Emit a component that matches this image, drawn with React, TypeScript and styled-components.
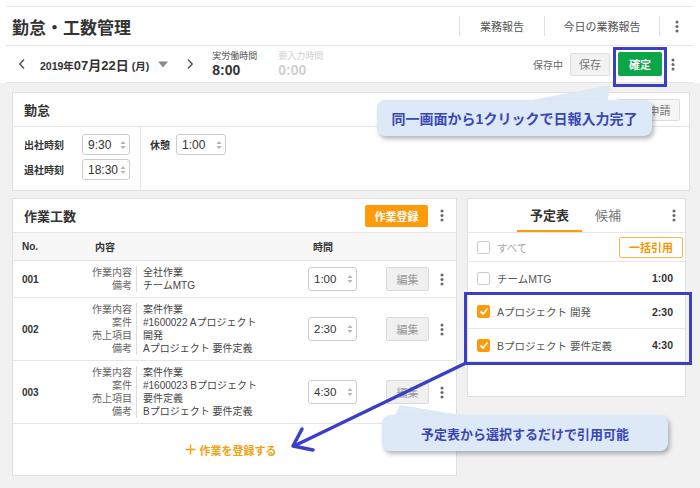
import React from "react";
import styled, { createGlobalStyle } from "styled-components";

const GlobalStyle = createGlobalStyle`
  * {
    box-sizing: border-box;
  }

  html,
  body {
    margin: 0;
    padding: 0;
    background: #fff;
  }

  body {
    font-family: "Liberation Sans", "Noto Sans CJK JP", sans-serif;
    color: #333;
  }
`;

const BLUE = "#3b3fc6";
const ORANGE = "#ff9a0a";

const Frame = styled.div`
  position: relative;
  width: 700px;
  height: 488px;
  overflow: hidden;
  background: #f1f1f1;
`;

const TopArea = styled.div`
  background: #fff;
  padding-top: 6px;
`;

const Header = styled.header`
  display: flex;
  align-items: center;
  height: 40px;
  margin: 0 7px 0 6px;
  padding-left: 6px;
  border-top: 1px solid #e6e6e6;
  border-bottom: 1px solid #e6e6e6;
`;

const Title = styled.h1`
  flex: 1;
  margin: 0;
  font-size: 17px;
  font-weight: bold;
  color: #333;
`;

const NavItem = styled.div<{ $w: number }>`
  display: flex;
  align-items: center;
  justify-content: center;
  width: ${(p) => p.$w}px;
  height: 20px;
  border-left: 1px solid #e2e2e2;
  font-size: 11px;
  color: #555;
`;

const DateBar = styled.div`
  display: flex;
  align-items: center;
  height: 37px;
  margin: 0 7px 0 6px;
  padding-right: 9px;
  border-bottom: 1px solid #e4e4e4;
`;

const ArrowButton = styled.div<{ $ml: number }>`
  display: flex;
  align-items: center;
  justify-content: center;
  width: 20px;
  height: 20px;
  margin-left: ${(p) => p.$ml}px;
`;

const DateText = styled.div`
  margin-left: 8px;
  font-size: 13px;
  font-weight: bold;
  color: #333;
  white-space: nowrap;
`;

const SmallPart = styled.span`
  font-size: 10.5px;
`;

const DropIcon = styled.div`
  display: flex;
  margin-left: 9px;
`;

const TimeBlock = styled.div<{ $ml: number; $muted?: boolean }>`
  display: flex;
  flex-direction: column;
  margin-left: ${(p) => p.$ml}px;
  color: ${(p) => (p.$muted ? "#cfcfcf" : "#333")};
`;

const TimeLabel = styled.span<{ $muted?: boolean }>`
  font-size: 9px;
  line-height: 12px;
  color: ${(p) => (p.$muted ? "#cfcfcf" : "#555")};
`;

const TimeValue = styled.span`
  font-size: 14px;
  line-height: 16px;
  font-weight: bold;
`;

const SaveArea = styled.div`
  display: flex;
  align-items: center;
  margin-left: auto;
`;

const SaveStatus = styled.span`
  margin-right: 7px;
  font-size: 10px;
  color: #666;
`;

const SaveButton = styled.div`
  display: flex;
  align-items: center;
  justify-content: center;
  width: 40px;
  height: 23px;
  border: 1px solid #ddd;
  border-radius: 2px;
  background: #f2f2f2;
  font-size: 11px;
  color: #777;
`;

const ConfirmButton = styled.div`
  display: flex;
  align-items: center;
  justify-content: center;
  width: 44px;
  height: 24px;
  margin-left: 8px;
  border-radius: 2px;
  background: #0aa648;
  font-size: 11px;
  font-weight: bold;
  color: #fff;
`;

const KebabCell = styled.div<{ $w: number; $ml?: number }>`
  display: flex;
  align-items: center;
  justify-content: center;
  width: ${(p) => p.$w}px;
  margin-left: ${(p) => p.$ml ?? 0}px;
  flex-shrink: 0;
`;

const Content = styled.main`
  display: flex;
  flex-direction: column;
  gap: 7px;
  padding: 9px 10px 0 12px;
`;

const Panel = styled.section<{ $w?: number; $h: number }>`
  display: flex;
  flex-direction: column;
  width: ${(p) => (p.$w ? `${p.$w}px` : "100%")};
  height: ${(p) => p.$h}px;
  border: 1px solid #e0e0e0;
  background: #fff;
`;

const PanelHeader = styled.div<{ $pr: number }>`
  display: flex;
  align-items: center;
  height: 34px;
  padding: 0 ${(p) => p.$pr}px 0 11px;
  border-bottom: 1px solid #e6e6e6;
  flex-shrink: 0;
`;

const PanelTitle = styled.h2`
  flex: 1;
  margin: 0;
  font-size: 13px;
  font-weight: bold;
  color: #333;
`;

const RequestButton = styled.div`
  display: flex;
  align-items: center;
  justify-content: center;
  width: 63px;
  height: 22px;
  border: 1px solid #ddd;
  border-radius: 2px;
  background: #f5f5f5;
  font-size: 11px;
  color: #777;
`;

const AttendanceBody = styled.div`
  display: flex;
  flex: 1;
`;

const AttendanceCell = styled.div<{ $w?: number; $pl: number }>`
  display: flex;
  flex-direction: column;
  gap: 4px;
  width: ${(p) => (p.$w ? `${p.$w}px` : "auto")};
  padding: 7px 0 0 ${(p) => p.$pl}px;
  border-right: ${(p) => (p.$w ? "1px solid #e6e6e6" : "none")};
`;

const FieldRow = styled.div`
  display: flex;
  align-items: center;
`;

const FieldLabel = styled.span<{ $w: number }>`
  width: ${(p) => p.$w}px;
  font-size: 10px;
  font-weight: bold;
  color: #333;
`;

const TimeField = styled.div<{ $w: number; $h: number; $fs: number }>`
  display: flex;
  align-items: center;
  justify-content: space-between;
  width: ${(p) => p.$w}px;
  height: ${(p) => p.$h}px;
  padding: 0 3px 0 5px;
  border: 1px solid #ccc;
  border-radius: 3px;
  background: #fff;
  font-size: ${(p) => p.$fs}px;
  color: #333;
  flex-shrink: 0;
`;

const BottomRow = styled.div`
  display: flex;
  align-items: flex-start;
  gap: 10px;
`;

const OrangeButton = styled.div`
  display: flex;
  align-items: center;
  justify-content: center;
  width: 63px;
  height: 22px;
  border-radius: 2px;
  background: ${ORANGE};
  font-size: 11px;
  font-weight: bold;
  color: #fff;
`;

const TableHead = styled.div`
  display: flex;
  align-items: center;
  height: 28px;
  padding-left: 9px;
  border-bottom: 1px solid #e6e6e6;
  background: #f7f7f7;
  font-size: 10px;
  font-weight: bold;
  color: #333;
  flex-shrink: 0;
`;

const HeadCell = styled.div<{ $w?: number; $pl?: number }>`
  width: ${(p) => (p.$w ? `${p.$w}px` : "auto")};
  padding-left: ${(p) => p.$pl ?? 0}px;
`;

const WorkRow = styled.div`
  display: flex;
  align-items: center;
  padding: 5px 12px 5px 9px;
  border-bottom: 1px solid #e6e6e6;
  flex-shrink: 0;
`;

const NoCell = styled.div`
  width: 60px;
  font-size: 10px;
  font-weight: bold;
  color: #333;
`;

const Details = styled.div`
  display: grid;
  grid-template-columns: 55px 1fr;
  width: 226px;
  font-size: 10px;
  line-height: 13px;
`;

const DetailLabel = styled.div`
  padding-right: 4px;
  border-right: 1px solid #ddd;
  text-align: right;
  color: #666;
`;

const DetailValue = styled.div`
  padding-left: 6px;
  color: #444;
  white-space: nowrap;
`;

const EditButton = styled.div`
  display: flex;
  align-items: center;
  justify-content: center;
  width: 43px;
  height: 24px;
  margin-left: 29px;
  border: 1px solid #d9d9d9;
  border-radius: 2px;
  background: #f0f0f0;
  font-size: 11px;
  color: #999;
`;

const AddFooter = styled.div`
  display: flex;
  flex: 1;
  align-items: center;
  justify-content: center;
  gap: 4px;
  padding-right: 8px;
  font-size: 11px;
  font-weight: bold;
  color: #f5a00f;
`;

const TabBar = styled.div`
  display: flex;
  align-items: stretch;
  height: 34px;
  padding: 0 9px 0 49px;
  border-bottom: 1px solid #e6e6e6;
  flex-shrink: 0;
`;

const Tab = styled.div<{ $active?: boolean; $w: number }>`
  display: flex;
  align-items: center;
  justify-content: center;
  width: ${(p) => p.$w}px;
  border-bottom: 2px solid ${(p) => (p.$active ? ORANGE : "transparent")};
  font-size: 13px;
  font-weight: ${(p) => (p.$active ? "bold" : "normal")};
  color: ${(p) => (p.$active ? "#333" : "#777")};
`;

const TabSpacer = styled.div`
  flex: 1;
`;

const ListRow = styled.div<{ $h: number; $pr: number }>`
  display: flex;
  align-items: center;
  gap: 7px;
  height: ${(p) => p.$h}px;
  padding: 0 ${(p) => p.$pr}px 0 9px;
  border-bottom: 1px solid #e6e6e6;
  flex-shrink: 0;
`;

const Check = styled.span<{ $checked?: boolean }>`
  display: flex;
  align-items: center;
  justify-content: center;
  width: 13px;
  height: 13px;
  border: 1px solid ${(p) => (p.$checked ? ORANGE : "#ccc")};
  border-radius: 2px;
  background: ${(p) => (p.$checked ? ORANGE : "#fff")};
  flex-shrink: 0;
`;

const ListText = styled.span<{ $muted?: boolean }>`
  flex: 1;
  font-size: 10.5px;
  color: ${(p) => (p.$muted ? "#aaa" : "#555")};
  white-space: nowrap;
`;

const ListTime = styled.span`
  font-size: 10.5px;
  font-weight: bold;
  color: #333;
`;

const QuoteButton = styled.div`
  display: flex;
  align-items: center;
  justify-content: center;
  width: 64px;
  height: 21px;
  border: 1px solid #f7b54e;
  border-radius: 2px;
  background: #fff;
  font-size: 11px;
  font-weight: bold;
  color: #f39800;
`;

const Overlay = styled.svg`
  position: absolute;
  top: 0;
  left: 0;
  pointer-events: none;
`;

const Highlight = styled.div<{ $x: number; $y: number; $w: number; $h: number }>`
  position: absolute;
  left: ${(p) => p.$x}px;
  top: ${(p) => p.$y}px;
  width: ${(p) => p.$w}px;
  height: ${(p) => p.$h}px;
  border: 3px solid ${BLUE};
  pointer-events: none;
`;

const Callout = styled.div<{ $x: number; $y: number; $w: number; $fs: number }>`
  position: absolute;
  left: ${(p) => p.$x}px;
  top: ${(p) => p.$y}px;
  display: flex;
  align-items: center;
  justify-content: center;
  width: ${(p) => p.$w}px;
  height: 36px;
  border-radius: 8px;
  background: #dde9f6;
  box-shadow: 2px 3px 4px rgba(0, 0, 0, 0.28);
  font-size: ${(p) => p.$fs}px;
  font-weight: bold;
  color: #3a46b6;
`;

const Kebab = () => (
  <svg width="4" height="13" viewBox="0 0 4 13">
    <circle cx="2" cy="2" r="1.5" fill="#666" />
    <circle cx="2" cy="6.5" r="1.5" fill="#666" />
    <circle cx="2" cy="11" r="1.5" fill="#666" />
  </svg>
);

const Chevron = ({ dir }: { dir: "left" | "right" }) => (
  <svg width="8" height="12" viewBox="0 0 8 12">
    <polyline
      points={dir === "left" ? "6,1.5 1.8,6 6,10.5" : "2,1.5 6.2,6 2,10.5"}
      fill="none"
      stroke="#555"
      strokeWidth="1.5"
    />
  </svg>
);

const Spinner = () => (
  <svg width="6" height="10" viewBox="0 0 6 10">
    <polygon points="0.5,4 3,1 5.5,4" fill="#b5b5b5" />
    <polygon points="0.5,6 3,9 5.5,6" fill="#b5b5b5" />
  </svg>
);

const CheckMark = () => (
  <svg width="10" height="9" viewBox="0 0 10 9">
    <polyline points="1.5,4.5 4,7 8.5,1.5" fill="none" stroke="#fff" strokeWidth="1.8" />
  </svg>
);

const Plus = () => (
  <svg width="11" height="11" viewBox="0 0 11 11">
    <path d="M5.5 0.5v10M0.5 5.5h10" stroke="#f5a00f" strokeWidth="1.4" />
  </svg>
);

type WorkItem = {
  no: string;
  time: string;
  details: [string, string][];
};

const workItems: WorkItem[] = [
  {
    no: "001",
    time: "1:00",
    details: [
      ["作業内容", "全社作業"],
      ["備考", "チームMTG"],
    ],
  },
  {
    no: "002",
    time: "2:30",
    details: [
      ["作業内容", "案件作業"],
      ["案件", "#1600022 Aプロジェクト"],
      ["売上項目", "開発"],
      ["備考", "Aプロジェクト 要件定義"],
    ],
  },
  {
    no: "003",
    time: "4:30",
    details: [
      ["作業内容", "案件作業"],
      ["案件", "#1600023 Bプロジェクト"],
      ["売上項目", "要件定義"],
      ["備考", "Bプロジェクト 要件定義"],
    ],
  },
];

const scheduleItems = [
  { label: "チームMTG", time: "1:00", checked: false, h: 33 },
  { label: "Aプロジェクト 開発", time: "2:30", checked: true, h: 34 },
  { label: "Bプロジェクト 要件定義", time: "4:30", checked: true, h: 33 },
];

const App: React.FC = () => {
  return (
    <>
      <GlobalStyle />
      <Frame>
        <TopArea>
          <Header>
            <Title>勤怠・工数管理</Title>
            <NavItem $w={85}>業務報告</NavItem>
            <NavItem $w={115}>今日の業務報告</NavItem>
            <NavItem $w={34}>
              <Kebab />
            </NavItem>
          </Header>

          <DateBar>
            <ArrowButton $ml={6}>
              <Chevron dir="left" />
            </ArrowButton>
            <DateText>
              <SmallPart>2019年</SmallPart>07月22日<SmallPart> (月)</SmallPart>
            </DateText>
            <DropIcon>
              <svg width="10" height="7" viewBox="0 0 10 7">
                <polygon points="0,0.5 10,0.5 5,6.5" fill="#8a8a8a" />
              </svg>
            </DropIcon>
            <ArrowButton $ml={12}>
              <Chevron dir="right" />
            </ArrowButton>
            <TimeBlock $ml={12}>
              <TimeLabel>実労働時間</TimeLabel>
              <TimeValue>8:00</TimeValue>
            </TimeBlock>
            <TimeBlock $ml={21} $muted>
              <TimeLabel $muted>要入力時間</TimeLabel>
              <TimeValue>0:00</TimeValue>
            </TimeBlock>

            <SaveArea>
              <SaveStatus>保存中</SaveStatus>
              <SaveButton>保存</SaveButton>
              <ConfirmButton>確定</ConfirmButton>
              <KebabCell $w={22}>
                <Kebab />
              </KebabCell>
            </SaveArea>
          </DateBar>
        </TopArea>

        <Content>
          <Panel $h={99}>
            <PanelHeader $pr={9}>
              <PanelTitle>勤怠</PanelTitle>
              <RequestButton>承認申請</RequestButton>
            </PanelHeader>
            <AttendanceBody>
              <AttendanceCell $w={128} $pl={11}>
                <FieldRow>
                  <FieldLabel $w={58}>出社時刻</FieldLabel>
                  <TimeField $w={48} $h={21} $fs={12}>
                    9:30
                    <Spinner />
                  </TimeField>
                </FieldRow>
                <FieldRow>
                  <FieldLabel $w={58}>退社時刻</FieldLabel>
                  <TimeField $w={48} $h={21} $fs={12}>
                    18:30
                    <Spinner />
                  </TimeField>
                </FieldRow>
              </AttendanceCell>
              <AttendanceCell $pl={9}>
                <FieldRow>
                  <FieldLabel $w={26}>休憩</FieldLabel>
                  <TimeField $w={50} $h={21} $fs={12}>
                    1:00
                    <Spinner />
                  </TimeField>
                </FieldRow>
              </AttendanceCell>
            </AttendanceBody>
          </Panel>

          <BottomRow>
            <Panel $w={445} $h={278}>
              <PanelHeader $pr={12}>
                <PanelTitle>作業工数</PanelTitle>
                <OrangeButton>作業登録</OrangeButton>
                <KebabCell $w={4} $ml={12}>
                  <Kebab />
                </KebabCell>
              </PanelHeader>
              <TableHead>
                <HeadCell $w={60}>No.</HeadCell>
                <HeadCell $w={226} $pl={13}>
                  内容
                </HeadCell>
                <HeadCell $pl={5}>時間</HeadCell>
              </TableHead>
              {workItems.map((item) => (
                <WorkRow key={item.no}>
                  <NoCell>{item.no}</NoCell>
                  <Details>
                    {item.details.map(([label, value]) => (
                      <React.Fragment key={label}>
                        <DetailLabel>{label}</DetailLabel>
                        <DetailValue>{value}</DetailValue>
                      </React.Fragment>
                    ))}
                  </Details>
                  <TimeField $w={49} $h={24} $fs={11.5}>
                    {item.time}
                    <Spinner />
                  </TimeField>
                  <EditButton>編集</EditButton>
                  <KebabCell $w={4} $ml={11}>
                    <Kebab />
                  </KebabCell>
                </WorkRow>
              ))}
              <AddFooter>
                <Plus />
                作業を登録する
              </AddFooter>
            </Panel>

            <Panel $w={219} $h={199}>
              <TabBar>
                <Tab $active $w={65}>
                  予定表
                </Tab>
                <Tab $w={52}>候補</Tab>
                <TabSpacer />
                <KebabCell $w={4}>
                  <Kebab />
                </KebabCell>
              </TabBar>
              <ListRow $h={29} $pr={2}>
                <Check />
                <ListText $muted>すべて</ListText>
                <QuoteButton>一括引用</QuoteButton>
              </ListRow>
              {scheduleItems.map((s) => (
                <ListRow key={s.label} $h={s.h} $pr={12}>
                  <Check $checked={s.checked}>{s.checked && <CheckMark />}</Check>
                  <ListText>{s.label}</ListText>
                  <ListTime>{s.time}</ListTime>
                </ListRow>
              ))}
            </Panel>
          </BottomRow>
        </Content>

        <Overlay width="700" height="488" viewBox="0 0 700 488">
          <polygon points="605,86 611,86 607,102 522,102" fill="#dde9f6" />
          <polygon points="400,405 472,417 394,417" fill="#dde9f6" />
          <line x1="466" y1="363" x2="294" y2="446" stroke={BLUE} strokeWidth="3.5" strokeLinecap="round" />
          <polyline
            points="302,429 293,446 313,450"
            fill="none"
            stroke={BLUE}
            strokeWidth="3.5"
            strokeLinecap="round"
            strokeLinejoin="round"
          />
        </Overlay>

        <Highlight $x={613} $y={47} $w={54} $h={40} />
        <Highlight $x={464} $y={292} $w={228} $h={73} />

        <Callout $x={377} $y={100} $w={275} $fs={14}>
          同一画面から1クリックで日報入力完了
        </Callout>
        <Callout $x={382} $y={415} $w={286} $fs={13}>
          予定表から選択するだけで引用可能
        </Callout>
      </Frame>
    </>
  );
};

export default App;
